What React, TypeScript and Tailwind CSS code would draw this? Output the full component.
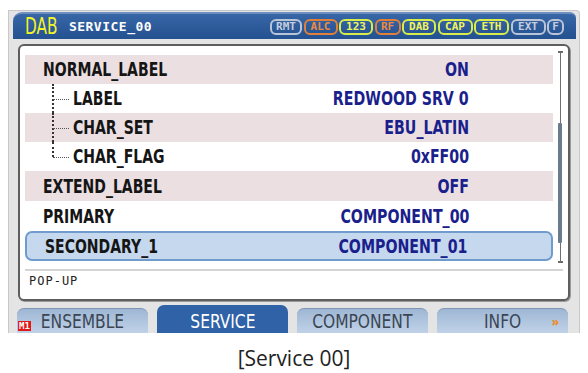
const UI = "font-['DejaVu_Sans_Condensed','DejaVu_Sans','Liberation_Sans',sans-serif]";
const MONO = "font-['DejaVu_Sans_Mono','Liberation_Mono',monospace]";

type Badge = { t: string; tone: "gray" | "orange" | "yellow"; w: string };

const badges: Badge[] = [
  { t: "RMT", tone: "gray", w: "w-[32px]" },
  { t: "ALC", tone: "orange", w: "w-[34px]" },
  { t: "123", tone: "yellow", w: "w-[34px]" },
  { t: "RF", tone: "orange", w: "w-[26px]" },
  { t: "DAB", tone: "yellow", w: "w-[34px]" },
  { t: "CAP", tone: "yellow", w: "w-[35px]" },
  { t: "ETH", tone: "yellow", w: "w-[35px]" },
  { t: "EXT", tone: "gray", w: "w-[35px]" },
  { t: "F", tone: "gray", w: "w-[17px]" },
];

const toneClass = {
  gray: "border-[#b9c4d6] text-[#c4cddc]",
  orange: "border-[#e0803a] text-[#ec8a3e]",
  yellow: "border-[#d8ec4a] text-[#f0f45a]",
};

type Row = { label: string; value: string; child?: "mid" | "last"; pink?: boolean; selected?: boolean; h: string };

const rows: Row[] = [
  { label: "NORMAL_LABEL", value: "ON", pink: true, h: "h-[29px]" },
  { label: "LABEL", value: "REDWOOD SRV 0", child: "mid", h: "h-[29px]" },
  { label: "CHAR_SET", value: "EBU_LATIN", child: "mid", pink: true, h: "h-[29px]" },
  { label: "CHAR_FLAG", value: "0xFF00", child: "last", h: "h-[29px]" },
  { label: "EXTEND_LABEL", value: "OFF", pink: true, h: "h-[30px]" },
  { label: "PRIMARY", value: "COMPONENT_00", h: "h-[30px]" },
  { label: "SECONDARY_1", value: "COMPONENT_01", selected: true, h: "h-[30px]" },
];

function Connector({ kind }: { kind: "mid" | "last" }) {
  return (
    <div className="relative h-full w-[30px] shrink-0">
      <div
        className={`absolute left-[9px] top-0 border-l-2 border-dotted border-[#333] ${kind === "last" ? "h-1/2" : "h-full"}`}
      />
      <div className="absolute left-[10px] top-1/2 w-[16px] border-t border-dotted border-[#555]" />
    </div>
  );
}

function ListRow({ row }: { row: Row }) {
  const bg = row.selected
    ? "bg-[#c6d8ee] border-2 border-[#6f9ccc] rounded-[7px]"
    : row.pink
      ? "bg-[#ecdfe2]"
      : "bg-white";
  return (
    <div className={`flex items-center ${row.h} ${bg} pl-[18px] pr-[84px]`}>
      {row.child ? <Connector kind={row.child} /> : null}
      <span className={`${UI} inline-block origin-left scale-x-[0.82] text-[19px] font-bold leading-none whitespace-nowrap text-[#151515]`}>
        {row.label}
      </span>
      <span className={`${UI} ml-auto inline-block origin-right scale-x-[0.83] text-[19px] font-bold leading-none whitespace-nowrap text-[#1a1f8c]`}>
        {row.value}
      </span>
    </div>
  );
}

function Tab({ label, active, badge, more }: { label: string; active?: boolean; badge?: boolean; more?: boolean }) {
  return (
    <div
      className={`relative flex w-[131px] items-end justify-center rounded-t-[7px] pb-[2px] ${
        active
          ? "h-[28px] bg-[#2f62a6] text-white"
          : "mt-[3px] h-[25px] border-t border-[#7f97b6] bg-gradient-to-b from-[#9fb7d4] to-[#c0d2e8] text-[#3b4654]"
      }`}
    >
      {badge ? (
        <span className={`${MONO} absolute bottom-[2px] left-[1px] bg-[#e01818] px-[1px] text-[9px] font-bold leading-[10px] text-white`}>
          M1
        </span>
      ) : null}
      <span className={`${UI} inline-block scale-x-[0.86] text-[20px] leading-[20px] whitespace-nowrap`}>{label}</span>
      {more ? (
        <span className="absolute bottom-[5px] right-[9px] text-[12px] font-bold leading-none text-[#f08a1a]">»</span>
      ) : null}
    </div>
  );
}

export default function App() {
  return (
    <div className="relative h-[373px] w-[588px] overflow-hidden bg-white">
      <div className="ml-[8px] mt-[10px] flex h-[323px] w-[572px] flex-col rounded-tr-[4px] border-l border-r border-t border-[#c8c8c8] bg-[#e4e4e4]">
        {/* title bar */}
        <div className="ml-[4px] mt-[1px] flex h-[27px] w-[563px] items-center rounded-tl-[9px] rounded-tr-[6px] border-t-2 border-[#6c8fc0] bg-gradient-to-b from-[#3766a6] to-[#245190] pl-[12px] pr-[12px]">
          <span className={`${UI} inline-block origin-left scale-x-[0.74] text-[23px] leading-none text-[#f2f228]`}>DAB</span>
          <span className={`${MONO} ml-[0px] text-[13px] font-bold leading-none tracking-[0.5px] text-white`}>
            SERVICE_00
          </span>
          <div className="ml-auto flex gap-[1.5px]">
            {badges.map((b) => (
              <span
                key={b.t}
                className={`${MONO} ${b.w} ${toneClass[b.tone]} flex h-[16px] items-center justify-center rounded-[6px] border-2 text-[11px] font-bold leading-none`}
              >
                {b.t}
              </span>
            ))}
          </div>
        </div>

        {/* content panel */}
        <div className="ml-[9px] mt-[5px] flex h-[257px] w-[552px] flex-col rounded-[6px] border-2 border-[#5e5e5e] bg-white pl-[5px] pr-[5px] pt-[9px] shadow-[1px_1px_0_#9a9a9a]">
          <div className="flex">
            <div className="flex w-[532px] flex-col">
              {rows.map((r) => (
                <ListRow key={r.label} row={r} />
              ))}
            </div>
            {/* scrollbar */}
            <div className="relative ml-[5px] flex w-[5px] flex-col items-center">
              <div className="-mt-[4px] h-[2px] w-[5px] bg-[#6a6a6a]" />
              <div className="h-[208px] w-[1px] bg-[#707070]" />
              <div className="h-[2px] w-[5px] bg-[#6a6a6a]" />
              <div className="absolute left-[0px] top-[68px] h-[120px] w-[4px] rounded-[1px] bg-[#6b7b8e]" />
            </div>
          </div>
          <div className="mt-[6px] h-[2px] w-[538px] bg-[#d4d4d4]" />
          <div className={`${MONO} ml-[4px] mt-[4px] text-[12px] leading-none tracking-[1px] text-[#222]`}>POP-UP</div>
        </div>

        {/* tabs */}
        <div className="ml-[8px] mt-[4px] flex h-[28px] items-start gap-[9px]">
          <Tab label="ENSEMBLE" badge />
          <Tab label="SERVICE" active />
          <Tab label="COMPONENT" />
          <Tab label="INFO" more />
        </div>
      </div>

      <div className="mt-[12px] text-center font-['Open_Sans','Noto_Sans',sans-serif] text-[21px] leading-[26px] text-[#222]">
        [Service 00]
      </div>
    </div>
  );
}
